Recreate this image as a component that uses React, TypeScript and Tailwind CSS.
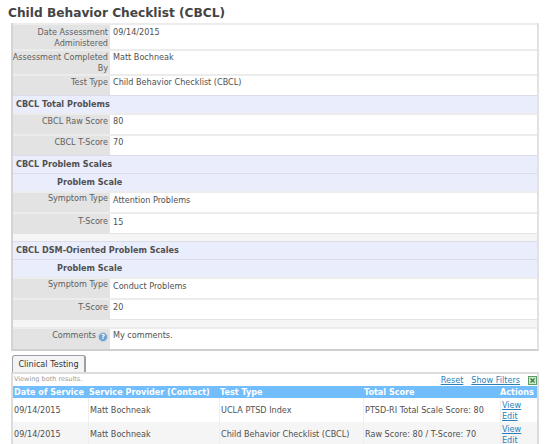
function Field({
    label,
    value,
    h,
    icon,
    labelPt = "pt-[1px]",
    valuePt = "pt-[1px]",
}: {
    label: string;
    value: string;
    h: string;
    icon?: boolean;
    labelPt?: string;
    valuePt?: string;
}) {
    return (
        <div className={`flex ${h} border-t-2 border-[#ececec]`}>
            <div
                className={`flex w-[97px] shrink-0 flex-col items-end bg-[#e3e3e3] pr-[2px] text-right leading-[11px] text-[#606060] ${labelPt}`}
            >
                <span className="whitespace-pre">
                    {label}
                    {icon && (
                        <span className="ml-[2px] mt-[2px] inline-flex h-[10px] w-[10px] items-center justify-center rounded-full border border-[#c5d6e6] bg-[#6f9fcc] align-top text-[7px] font-bold leading-none text-white">
                            ?
                        </span>
                    )}
                </span>
            </div>
            <div className={`flex-1 bg-white pl-[3px] leading-[11px] text-[#505050] ${valuePt}`}>{value}</div>
        </div>
    );
}

function Section({ title, sub }: { title: string; sub?: boolean }) {
    return (
        <div
            className={`flex h-[18px] items-center border-t border-[#dcdce8] bg-[#eaedfb] font-bold text-[#505050] ${
                sub ? "pl-[44px]" : "pl-[3px]"
            }`}
        >
            {title}
        </div>
    );
}

const results = [
    {
        date: "09/14/2015",
        provider: "Matt Bochneak",
        type: "UCLA PTSD Index",
        score: "PTSD-RI Total Scale Score: 80",
        bg: "bg-white",
    },
    {
        date: "09/14/2015",
        provider: "Matt Bochneak",
        type: "Child Behavior Checklist (CBCL)",
        score: "Raw Score: 80 / T-Score: 70",
        bg: "bg-[#f5f5f5]",
    },
];

export default function App() {
    return (
        <div className="h-[444px] w-[550px] overflow-hidden bg-white font-['DejaVu_Sans',Verdana,sans-serif] text-[8.1px]">
            <h1 className="h-[23px] pl-[8px] pt-[5px] text-[12.2px] font-bold leading-[16px] text-[#444]">
                Child Behavior Checklist (CBCL)
            </h1>

            {/* Assessment form */}
            <div className="mx-[11px] border-2 border-t-0 border-[#d4d4d4] border-r-[#e2e2e2] border-b-[#cfcfcf]">
                <Field
                    h="h-[26px]"
                    label={"Date Assessment\nAdministered"}
                    value="09/14/2015"
                    labelPt="pt-[2px]"
                    valuePt="pt-[2px]"
                />
                <Field h="h-[25px]" label={"Assessment Completed\nBy"} value="Matt Bochneak" />
                <Field h="h-[21px]" label="Test Type" value="Child Behavior Checklist (CBCL)" />
                <Section title="CBCL Total Problems" />
                <Field h="h-[21px]" label="CBCL Raw Score" value="80" />
                <Field h="h-[21px]" label="CBCL T-Score" value="70" />
                <Section title="CBCL Problem Scales" />
                <Section title="Problem Scale" sub />
                <Field h="h-[21px]" label="Symptom Type" value="Attention Problems" labelPt="pt-0" valuePt="pt-[2px]" />
                <Field h="h-[21px]" label="T-Score" value="15" labelPt="pt-[2px]" valuePt="pt-[3px]" />
                <div className="h-[8px] border-t border-[#e4e4e4] bg-[#f5f5f5]" />
                <Section title="CBCL DSM-Oriented Problem Scales" />
                <Section title="Problem Scale" sub />
                <Field h="h-[21px]" label="Symptom Type" value="Conduct Problems" labelPt="pt-0" valuePt="pt-[2px]" />
                <Field h="h-[21px]" label="T-Score" value="20" labelPt="pt-[2px]" valuePt="pt-[2px]" />
                <div className="h-[8px] border-t border-[#e4e4e4] bg-[#f5f5f5]" />
                <Field h="h-[22px]" label="Comments" value="My comments." icon />
            </div>

            {/* Tab */}
            <div className="ml-[12px] mt-[4px] flex h-[17px] w-[74px] items-center justify-center rounded-t-[3px] border border-b-0 border-r-2 border-[#9aa0a8] bg-[#f4f4f4] text-[#333]">
                Clinical Testing
            </div>

            {/* Results panel */}
            <div className="mx-[11px] border-2 border-b-0 border-[#dcdcdc]">
                <div className="flex h-[12px] items-center justify-between pl-[1px]">
                    <span className="text-[6.5px] text-[#999]">Viewing both results.</span>
                    <div className="flex items-center gap-[8px] text-[#2a7fb8] underline">
                        <span>Reset</span>
                        <span>Show Filters</span>
                        <svg width="9" height="9" viewBox="0 0 9 9">
                            <rect width="9" height="9" fill="#5d9f62" />
                            <rect x="1" y="1" width="7" height="7" fill="#cfe6cf" />
                            <path d="M2.5 2.5l4 4M6.5 2.5l-4 4" stroke="#2f7a36" strokeWidth="1.2" />
                        </svg>
                    </div>
                </div>
                <div className="flex h-[12px] items-center bg-[#72bdfb] font-bold text-white">
                    <div className="w-[75px] pl-[1px]">Date of Service</div>
                    <div className="w-[131px] pl-[1px]">Service Provider (Contact)</div>
                    <div className="w-[144px] pl-[1px]">Test Type</div>
                    <div className="w-[137px] pl-[1px]">Total Score</div>
                    <div className="flex-1">Actions</div>
                </div>
                {results.map((r) => (
                    <div key={r.type} className={`flex h-[24px] items-center text-[#505050] ${r.bg}`}>
                        <div className="w-[75px] pl-[1px]">{r.date}</div>
                        <div className="w-[131px] self-stretch border-l border-[#eee] pl-[1px] leading-[24px]">
                            {r.provider}
                        </div>
                        <div className="w-[144px] self-stretch border-l border-[#eee] pl-[1px] leading-[24px]">
                            {r.type}
                        </div>
                        <div className="w-[137px] self-stretch border-l border-[#eee] pl-[1px] leading-[24px]">
                            {r.score}
                        </div>
                        <div className="flex flex-1 flex-col self-stretch border-l border-[#eee] pl-[1px] pt-[2px] leading-[10.5px] text-[#2a7fb8] underline">
                            <span>View</span>
                            <span>Edit</span>
                        </div>
                    </div>
                ))}
            </div>
        </div>
    );
}
